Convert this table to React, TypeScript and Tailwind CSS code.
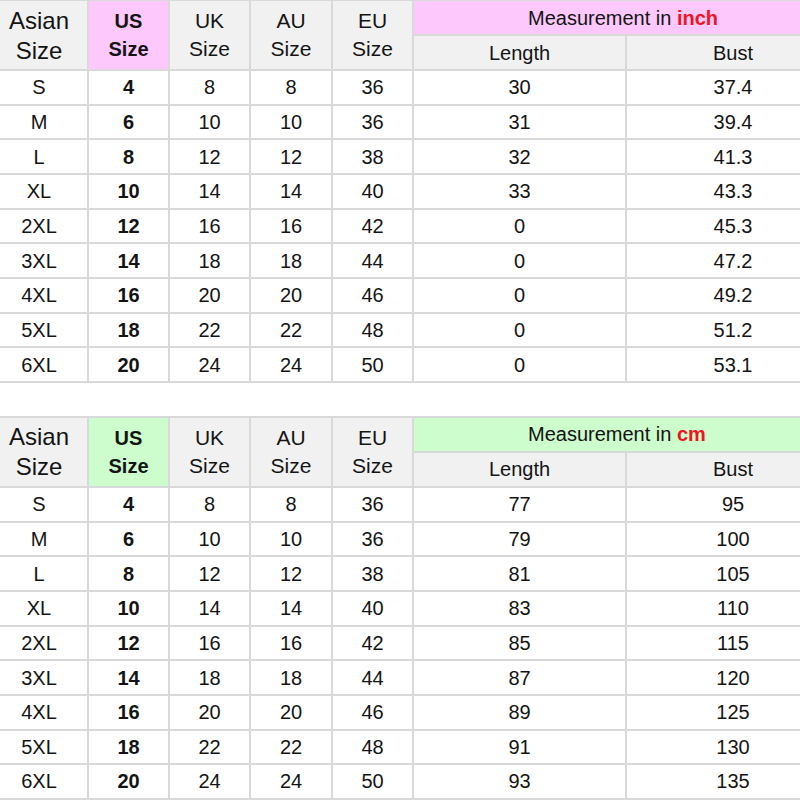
import React from "react";

type Row = [string, string, string, string, string, string, string];

const inchRows: Row[] = [
  ["S", "4", "8", "8", "36", "30", "37.4"],
  ["M", "6", "10", "10", "36", "31", "39.4"],
  ["L", "8", "12", "12", "38", "32", "41.3"],
  ["XL", "10", "14", "14", "40", "33", "43.3"],
  ["2XL", "12", "16", "16", "42", "0", "45.3"],
  ["3XL", "14", "18", "18", "44", "0", "47.2"],
  ["4XL", "16", "20", "20", "46", "0", "49.2"],
  ["5XL", "18", "22", "22", "48", "0", "51.2"],
  ["6XL", "20", "24", "24", "50", "0", "53.1"],
];

const cmRows: Row[] = [
  ["S", "4", "8", "8", "36", "77", "95"],
  ["M", "6", "10", "10", "36", "79", "100"],
  ["L", "8", "12", "12", "38", "81", "105"],
  ["XL", "10", "14", "14", "40", "83", "110"],
  ["2XL", "12", "16", "16", "42", "85", "115"],
  ["3XL", "14", "18", "18", "44", "87", "120"],
  ["4XL", "16", "20", "20", "46", "89", "125"],
  ["5XL", "18", "22", "22", "48", "91", "130"],
  ["6XL", "20", "24", "24", "50", "93", "135"],
];

function SizeTable({
  rows,
  unit,
  accent,
  className,
}: {
  rows: Row[];
  unit: string;
  accent: "pink" | "green";
  className?: string;
}) {
  const accentBg = accent === "pink" ? "bg-[#fdc9fd]" : "bg-[#cdfccd]";
  const head = "bg-[#f1f1f1] flex items-center justify-center text-center";
  const cell = "bg-white flex items-center justify-center text-[20px] leading-none";
  return (
    <div
      className={`grid w-[854px] ml-[-11px] bg-[#d9d9d9] p-[2px] gap-[2px] grid-cols-[96px_79px_79px_80px_79px_211px_212px] grid-rows-[33px_33px_repeat(9,32.667px)] ${className ?? ""}`}
    >
      <div className={`${head} row-span-2 text-[24px] leading-[30px] pt-[1px]`}>
        Asian
        <br />
        Size
      </div>
      <div className={`${accentBg} row-span-2 flex items-center justify-center text-center text-[20px] font-bold leading-[28px]`}>
        US
        <br />
        Size
      </div>
      <div className={`${head} row-span-2 text-[21px] leading-[28px]`}>
        UK
        <br />
        Size
      </div>
      <div className={`${head} row-span-2 text-[21px] leading-[28px]`}>
        AU
        <br />
        Size
      </div>
      <div className={`${head} row-span-2 text-[21px] leading-[28px]`}>
        EU
        <br />
        Size
      </div>
      <div className={`${accentBg} col-span-2 flex items-center text-[20px] leading-none pl-[114px]`}>
        <span>
          Measurement in <span className="font-bold text-[#f0141e]">{unit}</span>
        </span>
      </div>
      <div className={`${head} text-[20px] leading-none`}>Length</div>
      <div className={`${head} text-[20px] leading-none`}>Bust</div>
      {rows.map((r) => (
        <React.Fragment key={r[0]}>
          <div className={cell}>{r[0]}</div>
          <div className={`${cell} font-bold`}>{r[1]}</div>
          <div className={cell}>{r[2]}</div>
          <div className={cell}>{r[3]}</div>
          <div className={cell}>{r[4]}</div>
          <div className={cell}>{r[5]}</div>
          <div className={cell}>{r[6]}</div>
        </React.Fragment>
      ))}
    </div>
  );
}

export default function App() {
  return (
    <div
      className="w-[800px] h-[800px] overflow-hidden bg-white text-[#141414]"
      style={{ fontFamily: '"Liberation Sans", Arial, sans-serif' }}
    >
      <SizeTable rows={inchRows} unit="inch" accent="pink" className="mt-[-1px]" />
      <SizeTable rows={cmRows} unit="cm" accent="green" className="mt-[33px]" />
    </div>
  );
}
